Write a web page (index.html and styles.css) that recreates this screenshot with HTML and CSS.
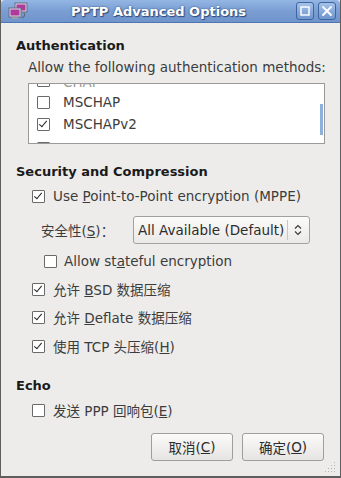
FILE: index.html
```html
<!DOCTYPE html>
<html>
<head>
<meta charset="utf-8">
<link rel="stylesheet" href="styles.css">
</head>
<body>
<div class="window">
  <div class="titlebar">
    <svg class="app-icon" width="24" height="20" viewBox="0 0 24 20">
      <rect x="8" y="2" width="12" height="9" fill="#d8d8e8" stroke="#6a6a80"/>
      <rect x="9.5" y="3.5" width="9" height="6" fill="#b03a9c"/>
      <rect x="2" y="7" width="12" height="9" fill="#d8d8e8" stroke="#6a6a80"/>
      <rect x="3.5" y="8.5" width="9" height="6" fill="#b03a9c"/>
      <rect x="5" y="16" width="6" height="2" fill="#9a9aaa"/>
      <path d="M17 12 q2 3 -2 5" stroke="#5a6a7a" fill="none" stroke-width="1.2"/>
    </svg>
    <div class="title">PPTP Advanced Options</div>
    <div class="wbtns">
      <div class="wbtn"><svg width="18" height="18" viewBox="0 0 18 18"><rect x="4.5" y="4.5" width="9" height="9" fill="none" stroke="#fff" stroke-width="1.6"/></svg></div>
      <div class="wbtn"><svg width="18" height="18" viewBox="0 0 18 18"><path d="M4.5 4.5 L13.5 13.5 M13.5 4.5 L4.5 13.5" stroke="#fff" stroke-width="2" stroke-linecap="round"/></svg></div>
    </div>
  </div>
  <div class="content">
    <div class="heading h-auth">Authentication</div>
    <div class="sub">Allow the following authentication methods:</div>
    <div class="listbox">
      <div class="litems">
        <div class="litem partial-top"><span class="cb"></span><span class="ltext">CHAP</span></div>
        <div class="litem"><span class="cb"></span><span class="ltext">MSCHAP</span></div>
        <div class="litem"><span class="cb checked"></span><span class="ltext">MSCHAPv2</span></div>
        <div class="litem partial-bot"><span class="cb"></span></div>
      </div>
      <div class="scrollbar"><div class="thumb"></div></div>
    </div>

    <div class="heading h-sec">Security and Compression</div>
    <div class="row r-mppe"><span class="cb checked"></span><span>Use <u>P</u>oint-to-Point encryption (MPPE)</span></div>
    <div class="row r-combo">
      <span class="clabel">安全性(<u>S</u>)：</span>
      <div class="combo"><span class="ctext">All Available (Default)</span><span class="csep"></span>
        <svg class="carrow" width="10" height="14" viewBox="0 0 10 14"><path d="M2 5.5 L5 2.5 L8 5.5 M2 8.5 L5 11.5 L8 8.5" fill="none" stroke="#3c3c3c" stroke-width="1.2"/></svg>
      </div>
    </div>
    <div class="row r-state"><span class="cb"></span><span>Allow st<u>a</u>teful encryption</span></div>
    <div class="row r-bsd"><span class="cb checked"></span><span>允许 <u>B</u>SD 数据压缩</span></div>
    <div class="row r-defl"><span class="cb checked"></span><span>允许 <u>D</u>eflate 数据压缩</span></div>
    <div class="row r-tcp"><span class="cb checked"></span><span>使用 TCP 头压缩(<u>H</u>)</span></div>

    <div class="heading h-echo">Echo</div>
    <div class="row r-echo"><span class="cb"></span><span>发送 PPP 回响包(<u>E</u>)</span></div>

    <div class="buttons">
      <div class="btn">取消(<u>C</u>)</div>
      <div class="btn">确定(<u>O</u>)</div>
    </div>
  </div>
  <svg class="grip" width="12" height="12" viewBox="0 0 12 12">
    <g fill="#b8b6b2">
      <rect x="9" y="1" width="1" height="1"/>
      <rect x="6" y="4" width="1" height="1"/><rect x="9" y="4" width="1" height="1"/>
      <rect x="3" y="7" width="1" height="1"/><rect x="6" y="7" width="1" height="1"/><rect x="9" y="7" width="1" height="1"/>
      <rect x="0" y="10" width="1" height="1"/><rect x="3" y="10" width="1" height="1"/><rect x="6" y="10" width="1" height="1"/><rect x="9" y="10" width="1" height="1"/>
    </g>
  </svg>
</div>
</body>
</html>
```

FILE: styles.css
```css
html, body {
  margin: 0;
  padding: 0;
}
body {
  width: 341px;
  height: 478px;
  overflow: hidden;
  font-family: "DejaVu Sans", "Noto Sans CJK SC", sans-serif;
  font-size: 13.5px;
  color: #3c3c3c;
}
.window {
  position: relative;
  box-sizing: border-box;
  width: 341px;
  height: 478px;
  background: #edeceb;
  border: 1px solid #5e5e5e;
  border-top: none;
  border-bottom: 2px solid #5e5e5e;
  display: flex;
  flex-direction: column;
}
.titlebar {
  height: 23px;
  flex: none;
  display: flex;
  align-items: center;
  background: linear-gradient(#94b6e4, #7a9ed3 50%, #6f94cc);
  border-bottom: 1px solid #4f76b0;
  border-radius: 4px 4px 0 0;
  box-sizing: border-box;
  position: relative;
}
.app-icon {
  margin-left: 6px;
  flex: none;
}
.title {
  flex: 1;
  text-align: center;
  color: #fff;
  font-weight: bold;
  font-size: 13px;
  padding-right: 10px;
  white-space: nowrap;
  text-shadow: 0 0 2px #2d4b7a, 1px 1px 1px #2d4b7a;
}
.wbtns {
  display: flex;
  gap: 4px;
  margin-right: 4px;
}
.wbtn {
  width: 18px;
  height: 18px;
  box-sizing: border-box;
  border: 1px solid #3f659e;
  border-radius: 3px;
  background: linear-gradient(#a4c2ea, #6f95cd);
  display: flex;
  align-items: center;
  justify-content: center;
}
.wbtn svg { width: 16px; height: 16px; }
.content {
  padding: 0 15px 0 15px;
  display: flex;
  flex-direction: column;
}
.heading {
  font-weight: bold;
  font-size: 13px;
  color: #1a1a1a;
  height: 18px;
  line-height: 18px;
}
.h-auth { margin-top: 14px; }
.sub {
  margin-left: 12px;
  height: 18px;
  line-height: 18px;
  margin-top: 3px;
  white-space: nowrap;
}
.listbox {
  margin: 7px 0 0 12px;
  height: 61px;
  box-sizing: border-box;
  border: 1px solid #9c9a98;
  background: #fff;
  position: relative;
  overflow: hidden;
  display: flex;
}
.litems {
  flex: 1;
}
.litem {
  height: 22px;
  display: flex;
  align-items: center;
  padding-left: 8px;
}
.litem .cb { margin-right: 13px; }
.litem.partial-top {
  height: 7px;
  align-items: flex-start;
}
.litem.partial-top .cb {
  align-self: flex-end;
  margin-bottom: 4px;
}
.litem.partial-top .ltext {
  line-height: 0;
  height: 0;
  margin-top: -2px;
  color: #9a9a9a;
}
.litem.partial-bot {
  align-items: flex-start;
  padding-top: 7px;
  box-sizing: border-box;
}
.scrollbar {
  width: 4px;
  position: relative;
}
.thumb {
  position: absolute;
  top: 20px;
  left: 0;
  width: 3px;
  height: 31px;
  background: #8eb0dd;
}
.cb {
  display: inline-block;
  width: 13px;
  height: 13px;
  box-sizing: border-box;
  border: 1px solid #6a6a6a;
  border-radius: 1px;
  background: #fff;
  position: relative;
  flex: none;
}
.cb.checked::after {
  content: "";
  position: absolute;
  left: 3px;
  top: 0px;
  width: 3px;
  height: 7px;
  border: solid #222;
  border-width: 0 1.5px 1.5px 0;
  transform: rotate(40deg);
}
.h-sec { margin-top: 19px; }
.row {
  display: flex;
  align-items: center;
  height: 20px;
  white-space: nowrap;
}
.row .cb { margin-right: 8px; }
.r-mppe { margin-top: 5px; padding-left: 16px; }
.r-combo { margin-top: 10px; padding-left: 25px; height: 28px; }
.clabel { width: 92px; }
.combo {
  width: 177px;
  height: 28px;
  box-sizing: border-box;
  border: 1px solid #a3a19e;
  border-radius: 3px;
  background: linear-gradient(#fbfbfa, #eae9e7);
  display: flex;
  align-items: center;
  padding-left: 4px;
}
.ctext { flex: 1; color: #2c2c2c; white-space: nowrap; }
.csep { width: 1px; height: 20px; background: #c8c6c3; margin-right: 5px; }
.carrow { margin-right: 6px; }
.r-state { margin-top: 7px; padding-left: 28px; }
.r-state .cb { margin-right: 7px; }
.r-bsd { margin-top: 8px; padding-left: 16px; }
.r-defl { margin-top: 8px; padding-left: 16px; }
.r-tcp { margin-top: 9px; padding-left: 16px; }
.h-echo { margin-top: 21px; }
.r-echo { margin-top: 5px; padding-left: 16px; }
.buttons {
  display: flex;
  justify-content: flex-end;
  gap: 9px;
  margin-top: 13px;
  margin-right: 1px;
}
.btn {
  width: 82px;
  height: 28px;
  box-sizing: border-box;
  border: 1px solid #a09e9b;
  border-radius: 3px;
  background: linear-gradient(#fbfbfa, #e6e4e2);
  display: flex;
  align-items: center;
  justify-content: center;
  color: #2c2c2c;
}
.grip {
  position: absolute;
  right: 3px;
  bottom: 3px;
}
```
